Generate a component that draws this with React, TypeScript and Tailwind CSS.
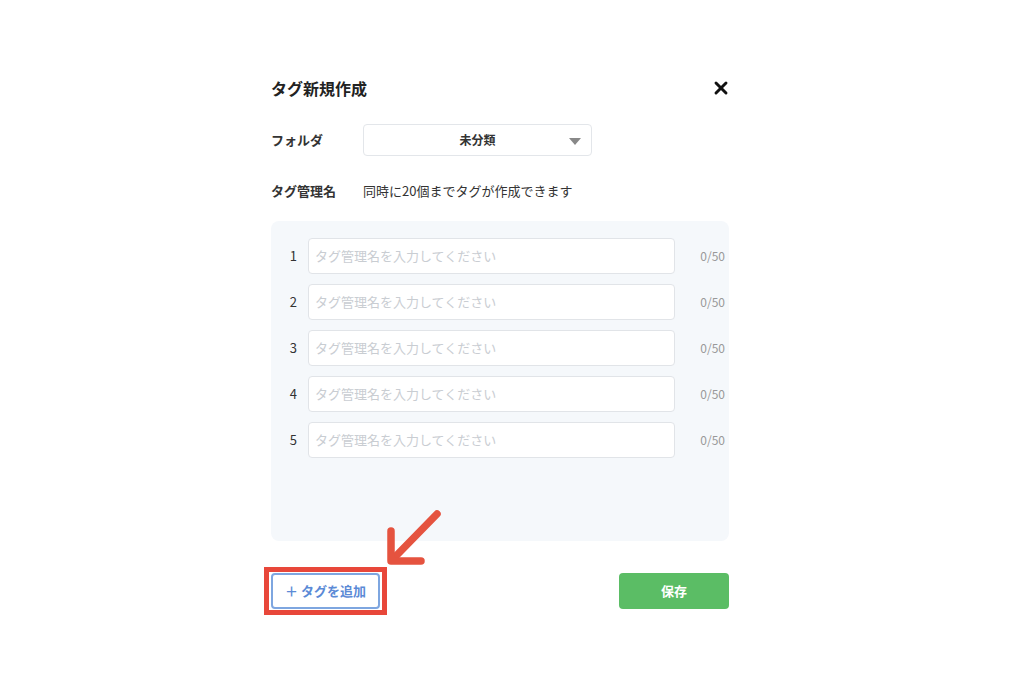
import { X } from "lucide-react";

const rows = [1, 2, 3, 4, 5];

const App = () => {
  return (
    <div
      className="relative w-[1024px] h-[680px] bg-white text-[#333]"
      style={{ fontFamily: '"Noto Sans CJK JP", "Noto Sans", sans-serif' }}
    >
      <div className="pl-[271px] pt-[76px] w-[729px] flex flex-col">
        {/* header */}
        <div className="h-[24px] flex items-center justify-between">
          <p className="text-[16px] font-bold text-[#222] leading-none">タグ新規作成</p>
          <X className="w-[20px] h-[20px] mr-[-2px] text-[#111]" strokeWidth={3.5} />
        </div>

        {/* folder */}
        <div className="mt-[24px] flex items-center">
          <p className="w-[92px] text-[13px] font-bold">フォルダ</p>
          <div className="relative w-[229px] h-[32px] border border-[#e3e6ea] rounded-[4px] flex items-center justify-center">
            <span className="text-[12px] font-bold text-[#333]">未分類</span>
            <span className="absolute right-[10px] top-[13px] w-0 h-0 border-l-[6px] border-r-[6px] border-t-[7px] border-l-transparent border-r-transparent border-t-[#888]" />
          </div>
        </div>

        {/* tag name */}
        <div className="mt-[25px] h-[20px] flex items-center">
          <p className="w-[92px] text-[13px] font-bold">タグ管理名</p>
          <p className="text-[13px] text-[#333]">同時に20個までタグが作成できます</p>
        </div>

        {/* list panel */}
        <div className="mt-[20px] h-[320px] bg-[#f5f8fb] rounded-[8px] pt-[17px] flex flex-col gap-[10px]">
          {rows.map((n) => (
            <div key={n} className="flex items-center h-[36px]">
              <span className="w-[37px] pr-[11px] text-right text-[13px] text-[#333]">{n}</span>
              <div className="w-[367px] h-[36px] bg-white border border-[#e1e4e8] rounded-[4px] flex items-center px-[6px]">
                <span className="text-[13px] text-[#c9cdd2]">タグ管理名を入力してください</span>
              </div>
              <span className="flex-1 text-right pr-[4px] text-[12px] text-[#999]">0/50</span>
            </div>
          ))}
        </div>

        {/* footer */}
        <div className="mt-[32px] flex items-center justify-between">
          <button className="w-[109px] h-[36px] border-2 border-[#7ea6e0] rounded-[4px] bg-white text-[#5b8ad6] text-[13px] font-bold flex items-center justify-center">
            ＋ タグを追加
          </button>
          <button className="w-[110px] h-[36px] rounded-[4px] bg-[#5bbd65] text-white text-[13px] font-bold">
            保存
          </button>
        </div>
      </div>

      {/* annotation */}
      <div className="absolute left-[264px] top-[567px] w-[123px] h-[48px] border-[5px] border-[#e8473a]" />
      <svg className="absolute left-[380px] top-[505px]" width="70" height="65" viewBox="0 0 70 65">
        <g stroke="#e5533f" strokeWidth="7.5" strokeLinecap="round" strokeLinejoin="round" fill="none">
          <line x1="57" y1="9" x2="13" y2="54" />
          <polyline points="11,26 11,56 41,56" />
        </g>
      </svg>
    </div>
  );
};

export default App;
